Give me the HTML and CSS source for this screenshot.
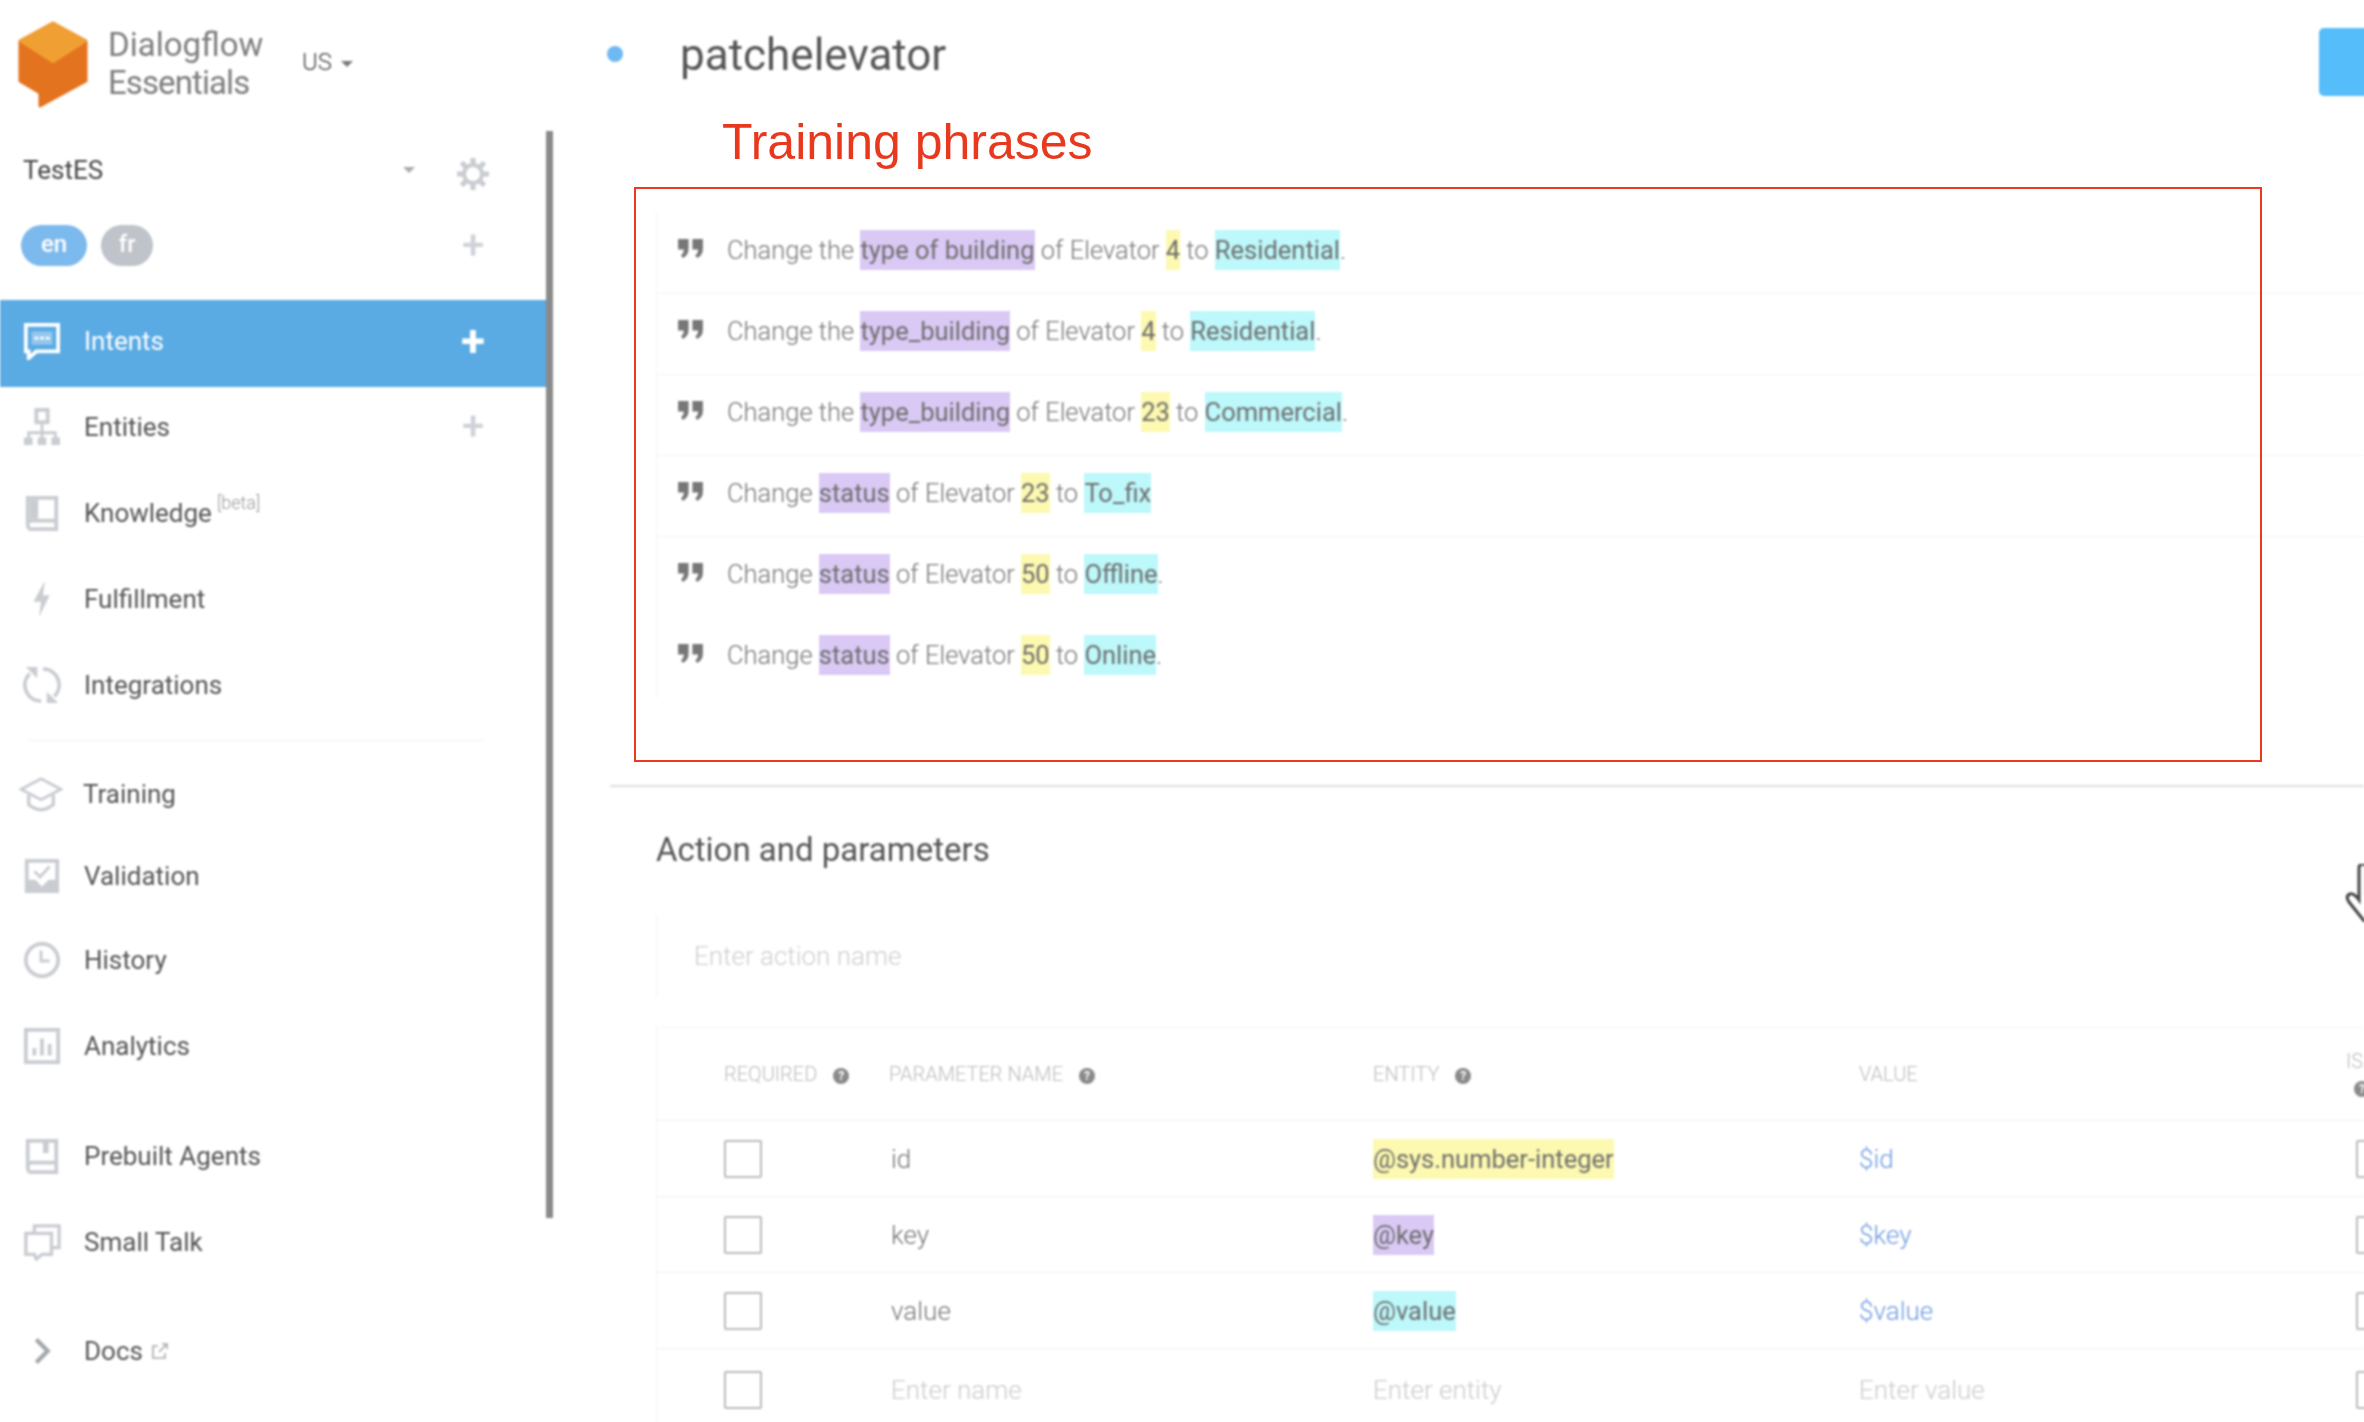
FILE: index.html
```html
<!DOCTYPE html>
<html lang="en">
<head>
    <meta charset="UTF-8">
    <meta name="viewport" content="width=device-width, initial-scale=1.0">
    <title>Dialogflow Essentials - patchelevator</title>
    <link rel="stylesheet" href="styles.css">
</head>
<body>
    <div class="app">
        <aside class="sidebar">
            <div class="brand">
                <svg class="logo" viewBox="0 0 70 87">
                    <path d="M35 2 L68 20 L68 60 L22 85 L22 72 L2 60 L2 20 Z" fill="#e4731f" stroke="#e4731f" stroke-width="3" stroke-linejoin="round"/>
                    <path d="M35 1 L69 20 L35 42 L1 20 Z" fill="#f0a032" stroke="#f0a032" stroke-width="1" stroke-linejoin="round"/>
                </svg>
                <div class="brand-name">Dialogflow<br><span class="brand-sub">Essentials</span></div>
                <div class="region">US <span class="caret"></span></div>
            </div>
            <div class="agent">
                <span class="agent-name">TestES</span>
                <span class="caret caret-light"></span>
                <svg class="side-action gear" viewBox="0 0 36 36">
                    <circle cx="18" cy="18" r="9" fill="none" stroke="#c9ccd1" stroke-width="4"/>
                    <path d="M18 2 V9 M18 27 V34 M2 18 H9 M27 18 H34 M6.5 6.5 L11.5 11.5 M24.5 24.5 L29.5 29.5 M6.5 29.5 L11.5 24.5 M24.5 11.5 L29.5 6.5" stroke="#c9ccd1" stroke-width="5"/>
                </svg>
            </div>
            <div class="langs">
                <span class="lang lang-on">en</span>
                <span class="lang">fr</span>
                <span class="plus">+</span>
            </div>
            <nav>
                <div class="nav-item active">
                    <svg class="nav-icon" viewBox="0 0 40 40">
                        <path d="M3 3 H37 V31 H14 L6 38 V31 H3 Z" fill="none" stroke="#fff" stroke-width="4"/>
                        <rect x="9" y="10" width="22" height="14" fill="#fff" opacity=".35"/>
                        <path d="M12 17 H16 M18 17 H22 M24 17 H28" stroke="#fff" stroke-width="3"/>
                    </svg>
                    <span>Intents</span>
                    <span class="plus plus-on">+</span>
                </div>
                <div class="nav-group">
                    <div class="nav-item">
                        <svg class="nav-icon" viewBox="0 0 40 40">
                            <path d="M20 14 V26 M6 34 V26 H34 V34 M20 26 V34" fill="none" stroke="#c9ccd1" stroke-width="3"/>
                            <rect x="14" y="2" width="12" height="13" fill="none" stroke="#c9ccd1" stroke-width="4"/>
                            <rect x="1" y="31" width="9" height="8" fill="#c9ccd1"/>
                            <rect x="15.5" y="31" width="9" height="8" fill="#c9ccd1"/>
                            <rect x="30" y="31" width="9" height="8" fill="#c9ccd1"/>
                        </svg>
                        <span>Entities</span>
                        <span class="plus">+</span>
                    </div>
                    <div class="nav-item">
                        <svg class="nav-icon" viewBox="0 0 40 40">
                            <path d="M5 32 V4 H35 V37 H9 Q5 37 5 32 Q5 28 9 28 H35" fill="none" stroke="#c9ccd1" stroke-width="4"/>
                            <rect x="7" y="6" width="9" height="20" fill="#c9ccd1"/>
                        </svg>
                        <span>Knowledge<sup class="beta">[beta]</sup></span>
                    </div>
                    <div class="nav-item">
                        <svg class="nav-icon" viewBox="0 0 40 40">
                            <path d="M23 1 L11 23 H19 L17 39 L28 16 H21 Z" fill="#c9ccd1"/>
                        </svg>
                        <span>Fulfillment</span>
                    </div>
                    <div class="nav-item">
                        <svg class="nav-icon" viewBox="0 0 40 40">
                            <path d="M7 8 A17 17 0 0 0 19 37 M21 3 A17 17 0 0 1 33 32" fill="none" stroke="#c9ccd1" stroke-width="4"/>
                            <path d="M3 1 H15 V13 Z M37 39 H25 V27 Z" fill="#c9ccd1"/>
                        </svg>
                        <span>Integrations</span>
                    </div>
                </div>
                <div class="nav-divider"></div>
                <div class="nav-item short">
                    <svg class="nav-icon wide" viewBox="0 0 46 40">
                        <path d="M23 4 L44 15 L23 26 L2 15 Z" fill="none" stroke="#c9ccd1" stroke-width="3"/>
                        <path d="M10 21 V31 Q23 42 36 31 V21" fill="none" stroke="#c9ccd1" stroke-width="3.5"/>
                    </svg>
                    <span>Training</span>
                </div>
                <div class="nav-item short">
                    <svg class="nav-icon" viewBox="0 0 40 40">
                        <path d="M2 2 H38 V38 H2 Z" fill="#c9ccd1"/>
                        <path d="M6 6 H34 V24 H27 L20 31 L13 24 H6 Z" fill="#fff"/>
                        <path d="M12 15 L18 21 L28 10" fill="none" stroke="#c9ccd1" stroke-width="3"/>
                    </svg>
                    <span>Validation</span>
                </div>
                <div class="nav-item">
                    <svg class="nav-icon" viewBox="0 0 40 40">
                        <circle cx="20" cy="20" r="17" fill="none" stroke="#c9ccd1" stroke-width="4"/>
                        <path d="M19 10 V21 H28" fill="none" stroke="#c9ccd1" stroke-width="3"/>
                    </svg>
                    <span>History</span>
                </div>
                <div class="nav-item">
                    <svg class="nav-icon" viewBox="0 0 40 40">
                        <rect x="3" y="3" width="34" height="34" fill="none" stroke="#c9ccd1" stroke-width="4"/>
                        <path d="M12 22 V30 M20 12 V30 M28 18 V30" stroke="#c9ccd1" stroke-width="4"/>
                    </svg>
                    <span>Analytics</span>
                </div>
                <div class="nav-item nav-gap">
                    <svg class="nav-icon" viewBox="0 0 40 40">
                        <path d="M5 32 V4 H35 V37 H9 Q5 37 5 32 Q5 27 9 27 H35" fill="none" stroke="#c9ccd1" stroke-width="4"/>
                        <rect x="21" y="4" width="6" height="13" fill="#c9ccd1"/>
                    </svg>
                    <span>Prebuilt Agents</span>
                </div>
                <div class="nav-item">
                    <svg class="nav-icon" viewBox="0 0 40 40">
                        <path d="M12 10 V3 H38 V26 H30" fill="none" stroke="#c9ccd1" stroke-width="3.5"/>
                        <path d="M3 11 H30 V33 H20 L14 38 L12 33 H3 Z" fill="none" stroke="#c9ccd1" stroke-width="3.5"/>
                    </svg>
                    <span>Small Talk</span>
                </div>
                <div class="nav-item nav-gap docs">
                    <svg class="nav-icon" viewBox="0 0 40 40">
                        <path d="M14 8 L26 20 L14 32" fill="none" stroke="#a3a7ae" stroke-width="4.5"/>
                    </svg>
                    <span>Docs</span>
                    <svg class="external" viewBox="0 0 18 18">
                        <path d="M7 4 H2 V16 H14 V11 M8 10 L16 2 M11 2 H16 V7" fill="none" stroke="#aaa" stroke-width="1.6"/>
                    </svg>
                </div>
            </nav>
            <div class="scrollbar"></div>
        </aside>

        <main class="main">
            <header class="intent-head">
                <span class="status-dot"></span>
                <h1>patchelevator</h1>
                <span class="save-btn"></span>
            </header>

            <section class="phrases">
                <div class="phrase">
                    <svg class="quote" viewBox="0 0 28 22"><path d="M1 1 H12 V11 Q12 18 6 21 L4 18 Q7 16 7 12 H1 Z M16 1 H27 V11 Q27 18 21 21 L19 18 Q22 16 22 12 H16 Z" fill="#777"/></svg>
                    <span>Change the <mark class="tag-purple">type of building</mark> of Elevator <mark class="tag-yellow">4</mark> to <mark class="tag-cyan">Residential</mark>.</span>
                </div>
                <div class="phrase">
                    <svg class="quote" viewBox="0 0 28 22"><path d="M1 1 H12 V11 Q12 18 6 21 L4 18 Q7 16 7 12 H1 Z M16 1 H27 V11 Q27 18 21 21 L19 18 Q22 16 22 12 H16 Z" fill="#777"/></svg>
                    <span>Change the <mark class="tag-purple">type_building</mark> of Elevator <mark class="tag-yellow">4</mark> to <mark class="tag-cyan">Residential</mark>.</span>
                </div>
                <div class="phrase">
                    <svg class="quote" viewBox="0 0 28 22"><path d="M1 1 H12 V11 Q12 18 6 21 L4 18 Q7 16 7 12 H1 Z M16 1 H27 V11 Q27 18 21 21 L19 18 Q22 16 22 12 H16 Z" fill="#777"/></svg>
                    <span>Change the <mark class="tag-purple">type_building</mark> of Elevator <mark class="tag-yellow">23</mark> to <mark class="tag-cyan">Commercial</mark>.</span>
                </div>
                <div class="phrase">
                    <svg class="quote" viewBox="0 0 28 22"><path d="M1 1 H12 V11 Q12 18 6 21 L4 18 Q7 16 7 12 H1 Z M16 1 H27 V11 Q27 18 21 21 L19 18 Q22 16 22 12 H16 Z" fill="#777"/></svg>
                    <span>Change <mark class="tag-purple">status</mark> of Elevator <mark class="tag-yellow">23</mark> to <mark class="tag-cyan">To_fix</mark></span>
                </div>
                <div class="phrase">
                    <svg class="quote" viewBox="0 0 28 22"><path d="M1 1 H12 V11 Q12 18 6 21 L4 18 Q7 16 7 12 H1 Z M16 1 H27 V11 Q27 18 21 21 L19 18 Q22 16 22 12 H16 Z" fill="#777"/></svg>
                    <span>Change <mark class="tag-purple">status</mark> of Elevator <mark class="tag-yellow">50</mark> to <mark class="tag-cyan">Offline</mark>.</span>
                </div>
                <div class="phrase">
                    <svg class="quote" viewBox="0 0 28 22"><path d="M1 1 H12 V11 Q12 18 6 21 L4 18 Q7 16 7 12 H1 Z M16 1 H27 V11 Q27 18 21 21 L19 18 Q22 16 22 12 H16 Z" fill="#777"/></svg>
                    <span>Change <mark class="tag-purple">status</mark> of Elevator <mark class="tag-yellow">50</mark> to <mark class="tag-cyan">Online</mark>.</span>
                </div>
            </section>

            <div class="section-rule"></div>

            <section class="params">
                <h2>Action and parameters</h2>
                <div class="action-input">Enter action name</div>
                <div class="param-table">
                    <div class="param-row param-head">
                        <div>REQUIRED <span class="help">?</span></div>
                        <div>PARAMETER NAME <span class="help">?</span></div>
                        <div>ENTITY <span class="help">?</span></div>
                        <div>VALUE</div>
                        <div class="is-list">IS<br><span class="help">?</span></div>
                    </div>
                    <div class="param-row">
                        <div><span class="check"></span></div>
                        <div class="param-name">id</div>
                        <div><mark class="tag-yellow">@sys.number-integer</mark></div>
                        <div class="param-value">$id</div>
                        <div><span class="check check-last"></span></div>
                    </div>
                    <div class="param-row">
                        <div><span class="check"></span></div>
                        <div class="param-name">key</div>
                        <div><mark class="tag-purple">@key</mark></div>
                        <div class="param-value">$key</div>
                        <div><span class="check check-last"></span></div>
                    </div>
                    <div class="param-row">
                        <div><span class="check"></span></div>
                        <div class="param-name">value</div>
                        <div><mark class="tag-cyan">@value</mark></div>
                        <div class="param-value">$value</div>
                        <div><span class="check check-last"></span></div>
                    </div>
                    <div class="param-row param-new">
                        <div><span class="check"></span></div>
                        <div class="param-name placeholder">Enter name</div>
                        <div class="placeholder">Enter entity</div>
                        <div class="placeholder">Enter value</div>
                        <div><span class="check check-last"></span></div>
                    </div>
                </div>
            </section>
        </main>

        <svg class="hand" viewBox="0 0 30 58">
            <path d="M14 36 V4 Q14 0 18 0 Q22 0 22 4 V30 L30 32 V58 H20 L4 38 Q0 32 5 30 Q9 29 14 36 Z" fill="#fff" stroke="#444" stroke-width="3"/>
        </svg>
    </div>

    <!-- red markup drawn on top of the screenshot -->
    <div class="markup-title">Training phrases</div>
    <div class="markup-box"></div>
</body>
</html>
```

FILE: styles.css
```css
html, body {
    margin: 0;
    height: 100%;
    overflow: hidden;
    background: #ffffff;
}
body {
    font-family: 'Roboto', 'Liberation Sans', sans-serif;
    color: #555;
}
.app {
    position: relative;
    display: flex;
    height: 1422px;
    filter: blur(0.9px);
}

/* sidebar */
.sidebar {
    position: relative;
    flex: 0 0 546px;
    width: 546px;
    font-size: 26px;
}
.scrollbar {
    position: absolute;
    left: 546px;
    top: 131px;
    width: 7px;
    height: 1087px;
    background: #8a8a8a;
}
.brand {
    display: flex;
    align-items: center;
    height: 131px;
    padding-left: 18px;
    box-sizing: border-box;
}
.logo {
    width: 70px;
    height: 87px;
    margin-right: 20px;
    margin-top: -2px;
}
.brand-name {
    width: 194px;
    font-size: 33px;
    line-height: 38px;
    color: #7d7d7d;
    margin-top: -4px;
}
.brand-sub {
    letter-spacing: -0.9px;
}
.region {
    font-size: 24px;
    font-weight: 300;
    color: #444;
    margin-top: -7px;
}
.region .caret {
    margin-left: 3px;
}
.caret {
    display: inline-block;
    vertical-align: middle;
    border-left: 6px solid transparent;
    border-right: 6px solid transparent;
    border-top: 6px solid #777;
}
.caret-light {
    border-top-color: #aaa;
    margin-left: auto;
}
.agent {
    display: flex;
    align-items: center;
    height: 78px;
    padding-left: 23px;
    color: #444;
    font-size: 26px;
}
.side-action {
    width: 36px;
    height: 36px;
    margin-left: 40px;
    margin-right: 55px;
    margin-top: 7px;
}
.langs {
    display: flex;
    align-items: center;
    gap: 14px;
    height: 91px;
    padding-left: 21px;
    padding-bottom: 18px;
    box-sizing: border-box;
}
.lang {
    display: block;
    min-width: 24px;
    height: 41px;
    line-height: 38px;
    padding: 0 14px;
    border-radius: 21px;
    background: #bfc3ca;
    color: #fff;
    font-size: 24px;
    font-weight: 500;
    text-align: center;
}
.lang-on {
    padding: 0 20px;
    background: #7cb9ec;
}
.plus {
    margin-left: auto;
    width: 40px;
    margin-right: 53px;
    text-align: center;
    font-size: 40px;
    line-height: 40px;
    font-weight: 500;
    color: #cfd2d8;
}
.plus-on {
    color: #fff;
    font-weight: 700;
    font-size: 44px;
}
.nav-item {
    display: flex;
    align-items: center;
    height: 86px;
    padding-left: 23px;
    color: #555;
}
.nav-item.active {
    height: 87px;
    padding-bottom: 6px;
    box-sizing: border-box;
    background: #5aaae4;
    color: #fff;
}
.nav-item.short {
    height: 81px;
}
.nav-item.short + .nav-item.short {
    height: 83px;
}
.nav-gap {
    margin-top: 24px;
}
.nav-item.docs {
    margin-top: 23px;
}
.nav-group {
    margin-top: -3px;
}
.nav-icon {
    flex: 0 0 38px;
    width: 38px;
    height: 38px;
    margin-right: 23px;
}
.nav-icon.wide {
    flex-basis: 44px;
    width: 44px;
    margin-left: -4px;
    margin-right: 20px;
}
.beta {
    font-size: 18px;
    font-weight: 300;
    color: #999;
    margin-left: 5px;
    vertical-align: 13px;
    line-height: 0;
}
.external {
    width: 18px;
    height: 18px;
    margin-left: 8px;
}
.nav-divider {
    height: 1px;
    margin: 12px 60px 12px 28px;
    background: #f4f4f4;
}

/* main column */
.main {
    flex: 1;
    min-width: 0;
    padding-left: 7px;
}
.intent-head {
    display: flex;
    align-items: center;
    height: 112px;
    padding-left: 54px;
    margin-bottom: 100px;
}
.status-dot {
    width: 16px;
    height: 16px;
    border-radius: 50%;
    background: #6fb8f2;
    margin-right: 57px;
    margin-top: -4px;
}
h1 {
    margin: -2px 0 0;
    font-size: 44px;
    font-weight: 400;
    color: #555;
}
.save-btn {
    margin-left: auto;
    width: 60px;
    height: 68px;
    margin-right: -15px;
    margin-top: 12px;
    border-radius: 5px 0 0 5px;
    background: #55bdf9;
}
.phrases {
    margin-left: 103px;
    border-left: 1px solid #f4f4f4;
}
.phrase {
    display: flex;
    align-items: center;
    height: 81px;
    padding-left: 20px;
    padding-bottom: 6px;
    box-sizing: border-box;
    border-top: 1px solid #f4f4f4;
    font-size: 25.5px;
    font-weight: 300;
    color: #777;
}
.phrase:first-child,
.phrase:last-child {
    border-top-color: transparent;
}
.quote {
    width: 27px;
    height: 21px;
    margin-right: 23px;
    margin-top: -3px;
}
mark {
    padding: 5px 0;
    color: #6e6e6e;
    font-weight: 400;
}
.tag-purple { background: #dac9f5; }
.tag-yellow { background: #fdf9b0; }
.tag-cyan { background: #bdf8fb; }
.section-rule {
    height: 2px;
    margin-top: 87px;
    margin-left: 57px;
    background: #dedede;
}
.params {
    margin-left: 103px;
}
h2 {
    margin: 0;
    height: 128px;
    line-height: 125px;
    font-size: 33px;
    font-weight: 400;
    color: #555;
}
.action-input {
    height: 82px;
    line-height: 82px;
    padding-left: 37px;
    border-left: 1px solid #f4f4f4;
    font-size: 26px;
    font-weight: 300;
    color: #cfcfcf;
}
.param-table {
    margin-top: 30px;
    border-left: 1px solid #f4f4f4;
}
.param-row {
    display: grid;
    grid-template-columns: 165px 484px 486px 487px 60px;
    align-items: center;
    height: 76px;
    padding-left: 67px;
    border-bottom: 1px solid #f0f0f0;
    box-sizing: border-box;
    font-size: 26px;
    font-weight: 300;
    color: #777;
}
.param-row mark {
    font-size: 25.5px;
}
.param-head {
    height: 94px;
    border-top: 1px solid #f6f6f6;
    font-size: 20px;
    color: #bbb;
}
.param-new {
    height: 80px;
    padding-top: 3px;
}
.param-name {
    padding-left: 2px;
}
.is-list {
    line-height: 26px;
}
.help {
    display: inline-block;
    width: 16px;
    height: 16px;
    margin-left: 11px;
    line-height: 16px;
    border-radius: 50%;
    background: #8a8a8a;
    color: #fff;
    font-size: 12px;
    font-weight: 700;
    text-align: center;
    vertical-align: 1px;
}
.is-list .help {
    margin-left: 8px;
}
.check {
    display: block;
    width: 34px;
    height: 34px;
    border: 2px solid #bbb;
    border-radius: 2px;
}
.check-last {
    margin-left: 10px;
}
.param-value {
    color: #6d9be0;
}
.placeholder {
    color: #cccccc;
}

/* cursor over the page */
.hand {
    position: absolute;
    left: 2345px;
    top: 864px;
    width: 30px;
    height: 58px;
}

/* red markup */
.markup-title {
    position: absolute;
    left: 722px;
    top: 110px;
    font-family: 'Liberation Sans', sans-serif;
    font-size: 50px;
    line-height: 64px;
    color: #e8391f;
}
.markup-box {
    position: absolute;
    left: 634px;
    top: 187px;
    width: 1624px;
    height: 571px;
    border: 2px solid #ec3a1f;
}
```
